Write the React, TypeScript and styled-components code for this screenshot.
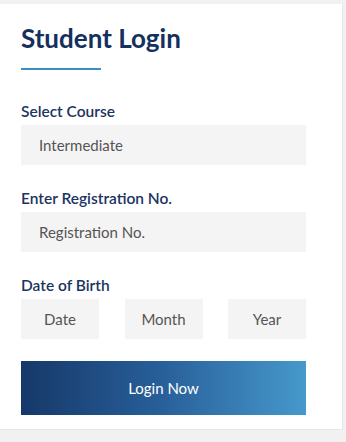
import React from "react";
import styled, { createGlobalStyle } from "styled-components";

const Global = createGlobalStyle`
  html, body { margin: 0; padding: 0; background: #f1f1f1; }
  body { font-family: "Lato", "Open Sans", sans-serif; }
  * { box-sizing: border-box; }
`;

const Card = styled.div`
  margin-top: 4px;
  width: 343px;
  height: 426px;
  background: #ffffff;
  border-right: 1px solid #e6e6e6;
  border-bottom: 1px solid #e6e6e6;
  padding: 19px 36px 0 21px;
  display: flex;
  flex-direction: column;
`;

const Title = styled.h2`
  margin: 0;
  font-size: 26px;
  line-height: 30px;
  font-weight: 700;
  color: #14305e;
`;

const Rule = styled.div`
  width: 80px;
  height: 2px;
  background: #3b8fc2;
  margin-top: 15px;
  margin-bottom: 32px;
`;

const Field = styled.div<{ $gap?: number }>`
  display: flex;
  flex-direction: column;
  margin-bottom: ${(p) => p.$gap ?? 24}px;
`;

const Label = styled.label`
  font-size: 15.5px;
  line-height: 18px;
  font-weight: 600;
  color: #1c3461;
  margin-bottom: 5px;
`;

const Box = styled.div<{ $center?: boolean }>`
  height: 40px;
  background: #f4f4f4;
  display: flex;
  align-items: center;
  justify-content: ${(p) => (p.$center ? "center" : "flex-start")};
  padding: 0 ${(p) => (p.$center ? 0 : 18)}px;
  font-size: 15px;
  color: #555555;
`;

const Row = styled.div`
  display: grid;
  grid-template-columns: 78px 78px 78px;
  justify-content: space-between;
`;

const Button = styled.button`
  height: 54px;
  border: none;
  background: linear-gradient(90deg, #163869 0%, #28609a 50%, #4699cb 100%);
  color: #ffffff;
  font-family: inherit;
  font-size: 15px;
  cursor: pointer;
`;

export default function App() {
  return (
    <>
      <Global />
      <Card>
        <Title>Student Login</Title>
        <Rule />
        <Field>
          <Label>Select Course</Label>
          <Box>Intermediate</Box>
        </Field>
        <Field>
          <Label>Enter Registration No.</Label>
          <Box>Registration No.</Box>
        </Field>
        <Field $gap={22}>
          <Label>Date of Birth</Label>
          <Row>
            <Box $center>Date</Box>
            <Box $center>Month</Box>
            <Box $center>Year</Box>
          </Row>
        </Field>
        <Button>Login Now</Button>
      </Card>
    </>
  );
}
